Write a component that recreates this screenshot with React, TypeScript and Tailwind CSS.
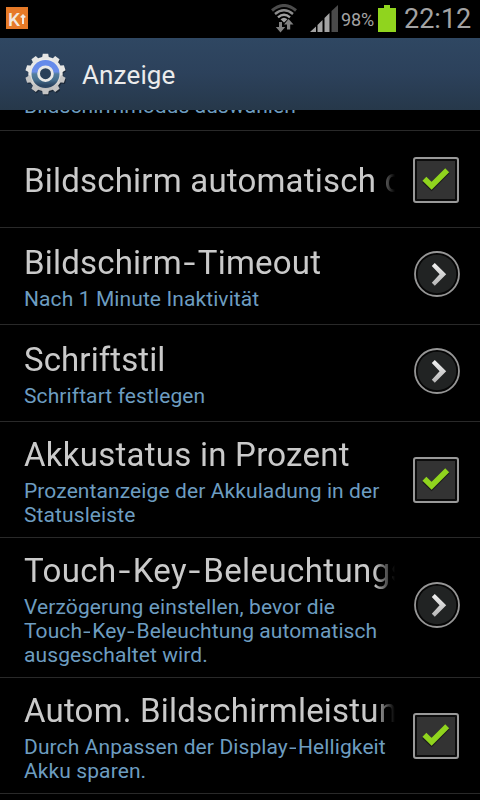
import { Fragment } from "react";

type Row = {
  title: string;
  lines: string[];
  control: "check" | "more";
  layout: string;
  spacing: string;
  offset: string;
};

const rows: Row[] = [
  { title: "Bildschirm automatisch drehen", lines: [], control: "check", layout: "h-[97px]", spacing: "pt-7 tracking-[0.2px]", offset: "mt-[26px] ml-[18px]" },
  { title: "Bildschirm-Timeout", lines: ["Nach 1 Minute Inaktivität"], control: "more", layout: "h-[97px]", spacing: "pt-[13px] tracking-[0.2px]", offset: "mt-[23px] ml-[19px]" },
  { title: "Schriftstil", lines: ["Schriftart festlegen"], control: "more", layout: "h-[97px]", spacing: "pt-[13px] tracking-[0.1px]", offset: "mt-[23px] ml-[19px]" },
  { title: "Akkustatus in Prozent", lines: ["Prozentanzeige der Akkuladung in der", "Statusleiste"], control: "check", layout: "h-[116px]", spacing: "pt-[11px] tracking-[0.25px]", offset: "mt-[35px] ml-[18px]" },
  { title: "Touch-Key-Beleuchtungsdauer", lines: ["Verzögerung einstellen, bevor die", "Touch-Key-Beleuchtung automatisch", "ausgeschaltet wird."], control: "more", layout: "h-[140px]", spacing: "pt-[11px] tracking-[0.4px]", offset: "mt-[44px] ml-[19px]" },
  { title: "Autom. Bildschirmleistung", lines: ["Durch Anpassen der Display-Helligkeit", "Akku sparen."], control: "check", layout: "h-[116px]", spacing: "pt-[11px] tracking-[0.2px]", offset: "mt-[35px] ml-[18px]" },
];

// The system font has a wider hyphen than Roboto
function Label({ text }: { text: string }) {
  return (
    <>
      {text.split("-").map((part, i) => (
        <Fragment key={i}>
          {i > 0 && <span className="inline-block scale-x-[1.3] mx-[0.1em]">-</span>}
          {part}
        </Fragment>
      ))}
    </>
  );
}

function Wifi() {
  return (
    <svg width="26" height="29" viewBox="0 0 26 29" fill="none" className="shrink-0">
      <path d="M1 6.5Q13-3.5 25 6.5" stroke="#4c4c4c" strokeWidth="3" />
      <path d="M4 10Q13 2.5 22 10" stroke="#8c8c8c" strokeWidth="2.4" />
      <path d="M7 13.3Q13 8 19 13.3" stroke="#a0a0a0" strokeWidth="2.4" />
      <path d="M9.5 15.2Q13 12.2 16.5 15.2L13 18.5Z" fill="#a0a0a0" />
      <path d="M8 18h3v5h3.2L9.5 28.5 4.8 23H8Z" fill="#808080" />
      <path d="M16 25.5h3.2v-5h3.3L17.6 15 13 20.5h3Z" fill="#808080" />
    </svg>
  );
}

function Signal() {
  return (
    <svg width="28" height="28" viewBox="0 0 28 28" className="shrink-0">
      <path d="M0 27 6 21.5V27Z" fill="#a3a3a3" />
      <path d="M7.5 20 12.5 15V27h-5Z" fill="#a3a3a3" />
      <path d="M14.5 13 19.5 8V27h-5Z" fill="#a3a3a3" />
      <path d="M21.5 6 28 0V27h-6.5Z" fill="#4a4a4a" />
    </svg>
  );
}

function Gear() {
  const teeth = [0, 36, 72, 108, 144, 180, 216, 252, 288, 324];
  return (
    <svg width="42" height="44" viewBox="0 0 42 44" className="shrink-0 mt-[2px]">
      <defs>
        <linearGradient id="disc" x1="0" y1="0" x2="0" y2="1">
          <stop offset="0" stopColor="#6389ea" />
          <stop offset="0.42" stopColor="#6a8eea" />
          <stop offset="0.5" stopColor="#537e9e" />
          <stop offset="0.7" stopColor="#47708f" />
          <stop offset="0.9" stopColor="#2b4562" />
        </linearGradient>
        <linearGradient id="metal" x1="0" y1="0" x2="0" y2="1">
          <stop offset="0" stopColor="#ececea" />
          <stop offset="0.6" stopColor="#e4e4e2" />
          <stop offset="1" stopColor="#b4b4b4" />
        </linearGradient>
      </defs>
      <g transform="translate(1 1.6)" fill="#18222e" opacity="0.8">
        <circle cx="20.5" cy="21" r="17" />
        {teeth.map((a) => (
          <path key={a} d="M17.5 5 18.2 1h4.6l.7 4Z" transform={`rotate(${a} 20.5 21)`} />
        ))}
      </g>
      <circle cx="20.5" cy="21" r="17.2" fill="url(#metal)" />
      {teeth.map((a) => (
        <path key={a} d="M16.8 6 17.8.8h5.4l1 5.2Z" fill={a > 100 && a < 260 ? "#c4c4c4" : "#e6e6e4"} transform={`rotate(${a} 20.5 21)`} />
      ))}
      <circle cx="20.5" cy="21" r="14" fill="url(#disc)" />
      <circle cx="20.5" cy="20.7" r="6.9" fill="#2a4059" stroke="#e8e8e6" strokeWidth="2.8" />
    </svg>
  );
}

function Check() {
  return (
    <div className="w-[46px] h-[46px] rounded-[3px] border-2 border-[#999999] bg-[#0c0c0c] p-[2px]">
      <svg width="38" height="38" viewBox="0 0 38 38" className="bg-[#333333]">
        <path d="M7.6 19 14.6 25.6 30.2 10" fill="none" stroke="#1c1c1c" strokeWidth="6.6" />
        <path d="M7.4 17.8 14.6 24.8 30.2 9.2" fill="none" stroke="#90d41e" strokeWidth="5.6" />
      </svg>
    </div>
  );
}

function More() {
  return (
    <svg width="46" height="46" viewBox="0 0 46 46">
      <defs>
        <linearGradient id="arrow" x1="0" y1="0" x2="0" y2="1">
          <stop offset="0" stopColor="#f2f2f2" />
          <stop offset="1" stopColor="#b5b5b5" />
        </linearGradient>
      </defs>
      <circle cx="23" cy="23" r="22" fill="#050505" stroke="#969696" strokeWidth="1.8" />
      <circle cx="23" cy="23" r="19.3" fill="#212323" />
      <path d="M17.8 15 20.8 12 32.2 23.2 20.8 34.8 17.8 31.8 25.6 23.2Z" fill="url(#arrow)" />
    </svg>
  );
}

export default function App() {
  return (
    <div className="w-[480px] h-[800px] overflow-hidden bg-black font-[Roboto,sans-serif]">
      <div className="flex items-start h-[38px] text-[#a3a3a3]">
        <div className="flex items-start w-[22px] h-[22px] mt-[7px] ml-[6px] bg-[#e67a28] text-[#f1e8df]">
          <span className="w-[11px] ml-[2px] text-[19px] leading-[25px] font-medium">K</span>
          <svg width="6" height="10" viewBox="0 0 6 10" className="mt-[7px] ml-px" fill="currentColor">
            <path d="M3 0 6 3 4 4V10H2V4L0 3Z" />
          </svg>
        </div>
        <div className="ml-[243px] mt-1">
          <Wifi />
        </div>
        <div className="ml-[13px] mt-[5px]">
          <Signal />
        </div>
        <span className="w-[37px] ml-[3px] text-[18px] leading-[40px] tracking-[-0.1px] whitespace-nowrap">98%</span>
        <div className="flex flex-col items-center w-[18px] mt-[5px]">
          <div className="w-[6px] h-[3px] bg-[#90d41e]" />
          <div className="w-[18px] h-6 bg-[#90d41e]" />
        </div>
        <span className="ml-[8px] text-[27px] leading-[38px] whitespace-nowrap">22:12</span>
      </div>

      <header className="flex items-center h-[72px] pl-[25px] bg-linear-to-b from-[#2f4762] via-[#2c415b] to-[#26384a]">
        <Gear />
        <h1 className="ml-[15px] mt-[2px] text-[26px] leading-[30px] tracking-[0.15px] text-[#ebebeb]">Anzeige</h1>
      </header>

      <main>
        <div className="flex items-end h-[21px] overflow-hidden border-b border-[#292929]">
          <p className="pl-6 pb-[12px] text-[21px] leading-6 tracking-[0.1px] text-[#6d9dc0]">Bildschirmmodus auswählen</p>
        </div>
        {rows.map((row) => (
          <section key={row.title} className={`flex items-start border-b border-[#292929] pl-6 ${row.layout}`}>
            <div className="w-[371px] shrink-0">
              <h2 className={`overflow-hidden text-[33px] leading-[44px] whitespace-nowrap text-[#cacaca] [mask-image:linear-gradient(to_right,#000_350px,transparent_371px)] ${row.spacing}`}>
                <Label text={row.title} />
              </h2>
              <div className="pt-[2px] text-[21px] leading-6 tracking-[0.1px] whitespace-nowrap text-[#6d9dc0]">
                {row.lines.map((line) => (
                  <p key={line}>
                    <Label text={line} />
                  </p>
                ))}
              </div>
            </div>
            <div className={row.offset}>{row.control === "check" ? <Check /> : <More />}</div>
          </section>
        ))}
      </main>
    </div>
  );
}
